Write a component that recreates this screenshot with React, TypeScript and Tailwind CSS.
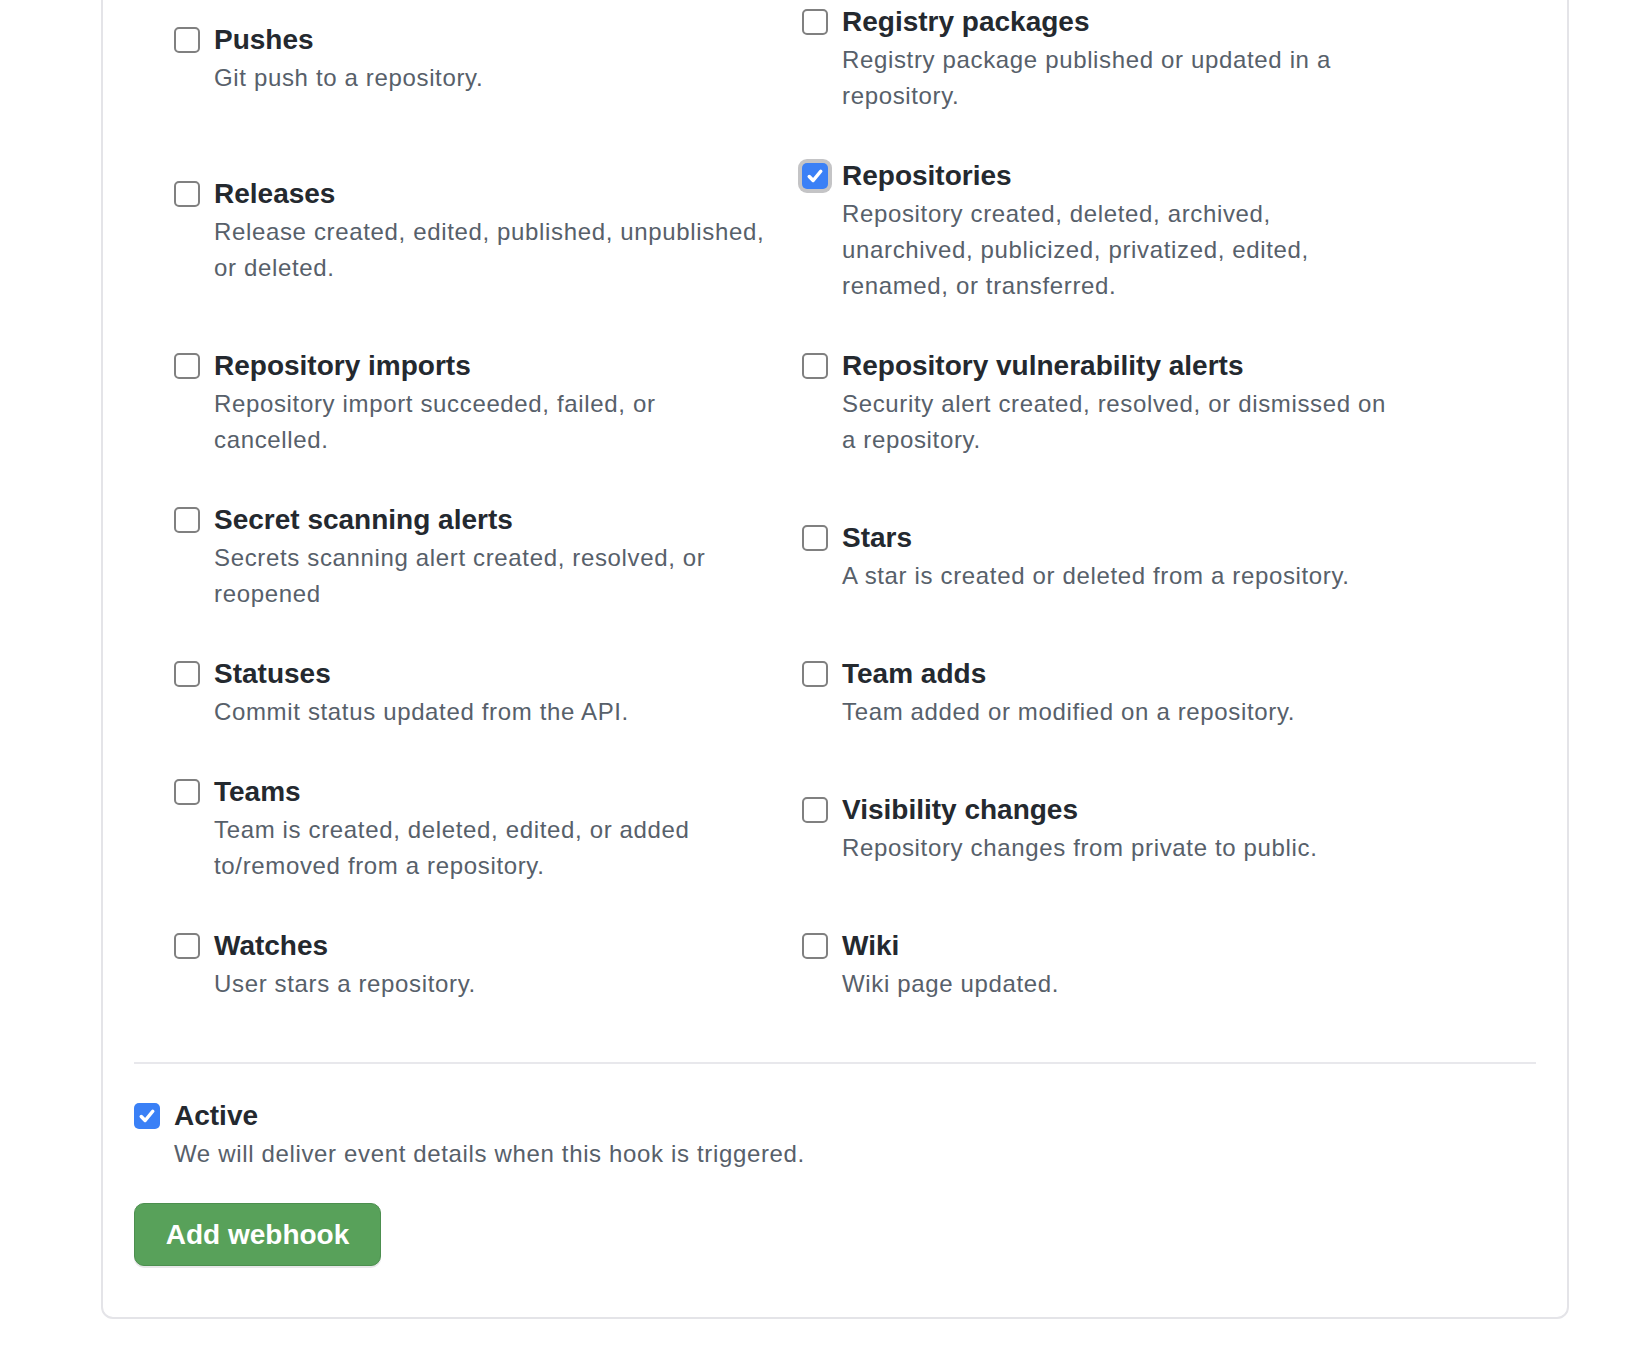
import React from "react";

type EventItem = {
  title: string;
  desc: string;
  checked?: boolean;
  focused?: boolean;
};

// rows are laid out in pairs, left + right
const rows: [EventItem, EventItem][] = [
  [
    { title: "Pushes", desc: "Git push to a repository." },
    { title: "Registry packages", desc: "Registry package published or updated in a repository." },
  ],
  [
    { title: "Releases", desc: "Release created, edited, published, unpublished, or deleted." },
    {
      title: "Repositories",
      desc: "Repository created, deleted, archived, unarchived, publicized, privatized, edited, renamed, or transferred.",
      checked: true,
      focused: true,
    },
  ],
  [
    { title: "Repository imports", desc: "Repository import succeeded, failed, or cancelled." },
    { title: "Repository vulnerability alerts", desc: "Security alert created, resolved, or dismissed on a repository." },
  ],
  [
    { title: "Secret scanning alerts", desc: "Secrets scanning alert created, resolved, or reopened" },
    { title: "Stars", desc: "A star is created or deleted from a repository." },
  ],
  [
    { title: "Statuses", desc: "Commit status updated from the API." },
    { title: "Team adds", desc: "Team added or modified on a repository." },
  ],
  [
    { title: "Teams", desc: "Team is created, deleted, edited, or added to/removed from a repository." },
    { title: "Visibility changes", desc: "Repository changes from private to public." },
  ],
  [
    { title: "Watches", desc: "User stars a repository." },
    { title: "Wiki", desc: "Wiki page updated." },
  ],
];

function Checkbox({ checked, focused }: { checked?: boolean; focused?: boolean }) {
  return (
    <span
      className={
        "shrink-0 flex items-center justify-center w-[26px] h-[26px] rounded-[5px] " +
        (checked ? "bg-[#3a80f6] " : "bg-white border-2 border-[#808080] ") +
        (focused ? "ring-4 ring-[#c4c4c6]" : "")
      }
    >
      {checked && (
        <svg width="20" height="20" viewBox="0 0 16 16" fill="none">
          <path d="M3.4 8.4 L6.5 11.6 L12.6 4.2" stroke="white" strokeWidth="2.8" strokeLinecap="round" strokeLinejoin="round" />
        </svg>
      )}
    </span>
  );
}

function Choice({ item }: { item: EventItem }) {
  const [checked, setChecked] = React.useState(!!item.checked);
  return (
    <label className="flex items-start cursor-pointer" onClick={() => setChecked(!checked)}>
      <span className="h-[40px] flex items-center mr-[14px]">
        <Checkbox checked={checked} focused={item.focused} />
      </span>
      <span className="flex flex-col max-w-[552px]">
        <span className="text-[28px] leading-[40px] font-semibold text-[#24292f]">{item.title}</span>
        <span className="text-[24px] leading-[36px] tracking-[0.65px] text-[#57606a]">{item.desc}</span>
      </span>
    </label>
  );
}

export default function App() {
  const [active, setActive] = React.useState(true);

  return (
    <div className="min-h-screen bg-white overflow-hidden" style={{ fontFamily: '"Liberation Sans", Arial, sans-serif' }}>
      <div className="ml-[101px] w-[1468px] mt-[-40px] border-2 border-[#e4e4e8] rounded-[12px] pt-[40px] px-[31px] pb-[51px]">
        {/* events */}
        <div className="ml-[40px] grid grid-cols-[628px_628px] gap-y-[42px] items-center">
          {rows.map((r, i) => (
            <React.Fragment key={i}>
              <Choice item={r[0]} />
              <Choice item={r[1]} />
            </React.Fragment>
          ))}
        </div>

        <div className="mt-[60px] h-[2px] bg-[#e8e8ec]" />

        {/* active */}
        <label className="mt-[32px] flex items-start cursor-pointer" onClick={() => setActive(!active)}>
          <span className="h-[40px] flex items-center mr-[14px]">
            <Checkbox checked={active} />
          </span>
          <span className="flex flex-col">
            <span className="text-[28px] leading-[40px] font-semibold text-[#24292f]">Active</span>
            <span className="text-[24px] leading-[36px] tracking-[0.65px] text-[#57606a]">
              We will deliver event details when this hook is triggered.
            </span>
          </span>
        </label>

        <button className="mt-[31px] w-[247px] h-[63px] rounded-[10px] bg-[#58a15a] border border-[#4c8f4f] shadow-[0_2px_0_rgba(27,31,36,0.1)] text-white text-[28px] font-semibold">
          Add webhook
        </button>
      </div>
    </div>
  );
}
